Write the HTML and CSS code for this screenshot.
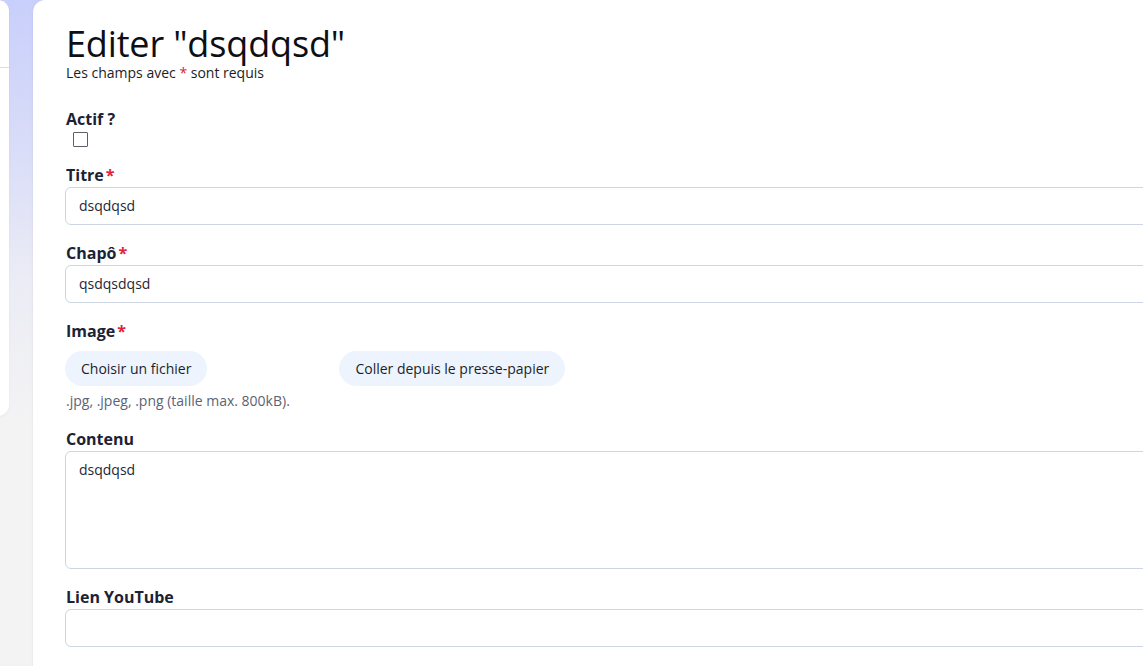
FILE: index.html
```html
<!DOCTYPE html>
<html lang="fr">
<head>
<meta charset="utf-8">
<title>Editer</title>
<link rel="stylesheet" href="styles.css">
</head>
<body>
<div class="layout">
  <aside class="sidebar">
    <div class="sidebar-head"></div>
    <div class="sidebar-item"></div>
  </aside>
  <main class="card">
    <h1 class="title">Editer "dsqdqsd"</h1>
    <p class="subtitle">Les champs avec <span class="req">*</span> sont requis</p>

    <div class="field field-check">
      <label class="label">Actif ?</label>
      <span class="checkbox"></span>
    </div>

    <div class="field">
      <label class="label">Titre<span class="req">*</span></label>
      <div class="input">dsqdqsd</div>
    </div>

    <div class="field">
      <label class="label">Chapô<span class="req">*</span></label>
      <div class="input">qsdqsdqsd</div>
    </div>

    <div class="field">
      <label class="label">Image<span class="req">*</span></label>
      <div class="buttons">
        <span class="pill">Choisir un fichier</span>
        <span class="pill">Coller depuis le presse-papier</span>
      </div>
      <p class="hint">.jpg, .jpeg, .png (taille max. 800kB).</p>
    </div>

    <div class="field">
      <label class="label">Contenu</label>
      <div class="input textarea">dsqdqsd</div>
    </div>

    <div class="field">
      <label class="label">Lien YouTube</label>
      <div class="input"></div>
    </div>
  </main>
</div>
</body>
</html>
```
FILE: styles.css
```css
html, body {
  margin: 0;
  padding: 0;
  height: 100%;
  overflow: hidden;
}
body {
  font-family: "Open Sans", "Noto Sans", sans-serif;
  background: linear-gradient(180deg, #c8cffb 0px, #d9ddf8 150px, #ebecf5 280px, #f3f3f4 420px, #f3f3f4 100%);
  color: #1b2236;
}
.layout {
  display: flex;
  align-items: flex-start;
  height: 100%;
}
.sidebar {
  flex: 0 0 240px;
  margin-left: -231px;
  height: 416px;
  background: #fff;
  border-radius: 0 11px 11px 0;
  box-shadow: 0 1px 3px rgba(0,0,0,0.05);
  display: flex;
  flex-direction: column;
}
.sidebar-head {
  height: 67px;
  border-bottom: 1px solid #dcdde3;
}
.sidebar-item {
  margin-top: 10px;
  margin-left: 230px;
  height: 40px;
  border-left: 1px solid #d8ddf0;
}
.card {
  flex: 0 0 1200px;
  margin-left: 24px;
  min-height: 700px;
  background: #fff;
  border-radius: 12px 0 0 0;
  box-shadow: -1px 0 2px rgba(0,0,0,0.04);
  padding: 24px 32px 0 32px;
  box-sizing: border-box;
}
.title {
  margin: 0;
  padding-left: 1px;
  font-size: 36px;
  font-weight: 400;
  line-height: 40px;
  letter-spacing: -0.15px;
  color: #0d0f14;
}
.subtitle {
  margin: 0 0 25px 1px;
  font-size: 14px;
  line-height: 18px;
  color: #1a1d26;
}
.req {
  color: #e0213b;
  margin-left: 2px;
}
.subtitle .req {
  margin-left: 0;
}
.field {
  display: flex;
  flex-direction: column;
  margin-bottom: 16px;
}
.label {
  padding-left: 1px;
  font-size: 16px;
  font-weight: 700;
  line-height: 24px;
  color: #1b2236;
}
.checkbox {
  width: 15px;
  height: 15px;
  border: 1px solid #5b5f6a;
  border-radius: 1px;
  margin: 1px 0 0 8px;
  box-sizing: border-box;
}
.input {
  height: 38px;
  border: 1px solid #cdd5e2;
  border-radius: 6px;
  box-sizing: border-box;
  padding: 0 13px;
  font-size: 14px;
  line-height: 36px;
  color: #1f2636;
}
.textarea {
  height: 118px;
  line-height: 20px;
  padding-top: 8px;
}
.buttons {
  display: flex;
  gap: 132px;
  margin-top: 8px;
}
.pill {
  height: 35px;
  line-height: 35px;
  padding: 0 16px;
  border-radius: 18px;
  background: #edf4fe;
  font-size: 14px;
  color: #1b1f2b;
}
.hint {
  margin: 5px 0 0 1px;
  font-size: 14px;
  line-height: 20px;
  color: #5b6374;
}
```
